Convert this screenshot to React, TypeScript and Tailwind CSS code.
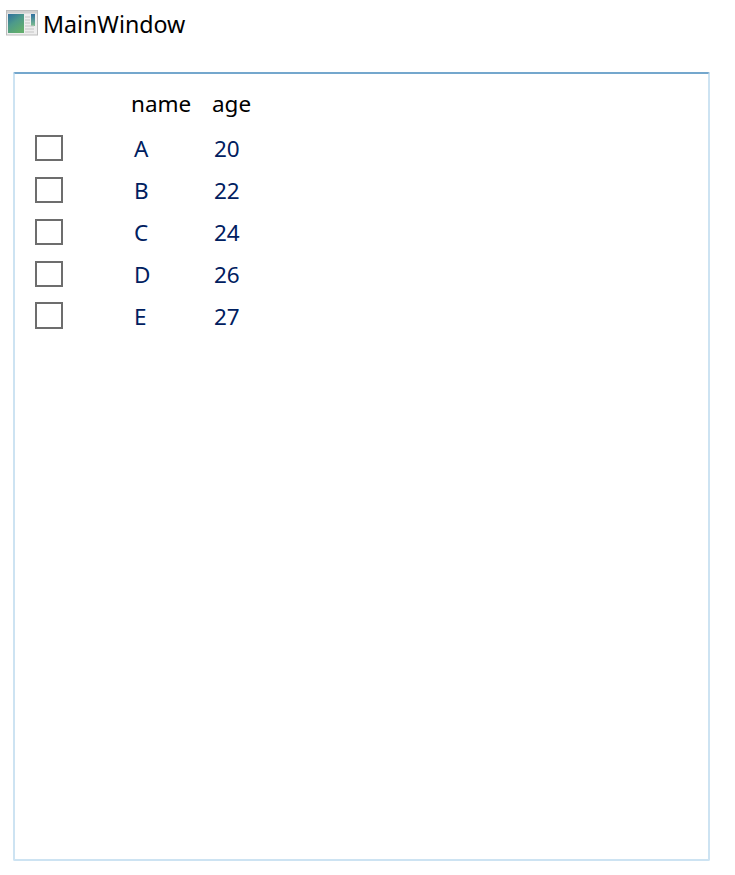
const ROWS = [
  { name: 'A', age: 20 },
  { name: 'B', age: 22 },
  { name: 'C', age: 24 },
  { name: 'D', age: 26 },
  { name: 'E', age: 27 },
];

function WindowIcon() {
  return (
    <svg width="32" height="26" viewBox="0 0 32 26" className="shrink-0">
      <defs>
        <linearGradient id="pane" x1="0" y1="0" x2="0.6" y2="1">
          <stop offset="0" stopColor="#2f6f9f" />
          <stop offset="0.5" stopColor="#4d9a8a" />
          <stop offset="1" stopColor="#62ad6d" />
        </linearGradient>
        <linearGradient id="side" x1="0" y1="0" x2="0" y2="1">
          <stop offset="0" stopColor="#2f6f9f" />
          <stop offset="1" stopColor="#7fbf8f" />
        </linearGradient>
      </defs>
      <rect x="0.5" y="0.5" width="31" height="24.5" fill="#eeeeee" stroke="#bdbdbd" />
      <rect x="1" y="1" width="30" height="2.5" fill="#d0d0d0" />
      <rect x="2" y="4" width="16" height="19" fill="url(#pane)" />
      <rect x="25" y="4" width="4" height="12" fill="url(#side)" />
      <path d="M19 7h5M19 10h5M19 13h5M19 16h9M19 19h9M19 22h9" stroke="#c4c4c4" strokeWidth="1.2" />
    </svg>
  );
}

export default function App() {
  return (
    <div className="w-[735px] h-[875px] bg-white overflow-hidden font-['Noto_Sans','Open_Sans',sans-serif] antialiased">
      <div className="flex items-center h-[26px] mt-[10px] ml-[6px] gap-[5px]">
        <WindowIcon />
        <span className="pt-[2px] text-[23.2px] leading-[30px] text-black">MainWindow</span>
      </div>

      <div className="ml-[13px] mt-[36px] w-[697px] h-[789px] rounded-[2px] border-2 border-[#cde3f2] border-t-[#74a7cd] pl-[20px]">
        <div className="flex h-[59px] pt-[14px] text-[22.5px] leading-[32px] text-black">
          <span className="ml-[96px] w-[81px]">name</span>
          <span>age</span>
        </div>
        {ROWS.map((r, i) => (
          <div key={r.name} className="flex items-start h-[42px] text-[22.5px] leading-[32px] text-[#002060]">
            {i === 4 ? (
              <div className="w-[28px] h-[27px] mt-[1px] border-2 border-[#6d6d6d]" />
            ) : (
              <div className="w-[28px] h-[26px] mt-[2px] border-2 border-[#6d6d6d]" />
            )}
            <span className="ml-[71px] w-[80px]">{r.name}</span>
            <span>{r.age}</span>
          </div>
        ))}
      </div>
    </div>
  );
}
